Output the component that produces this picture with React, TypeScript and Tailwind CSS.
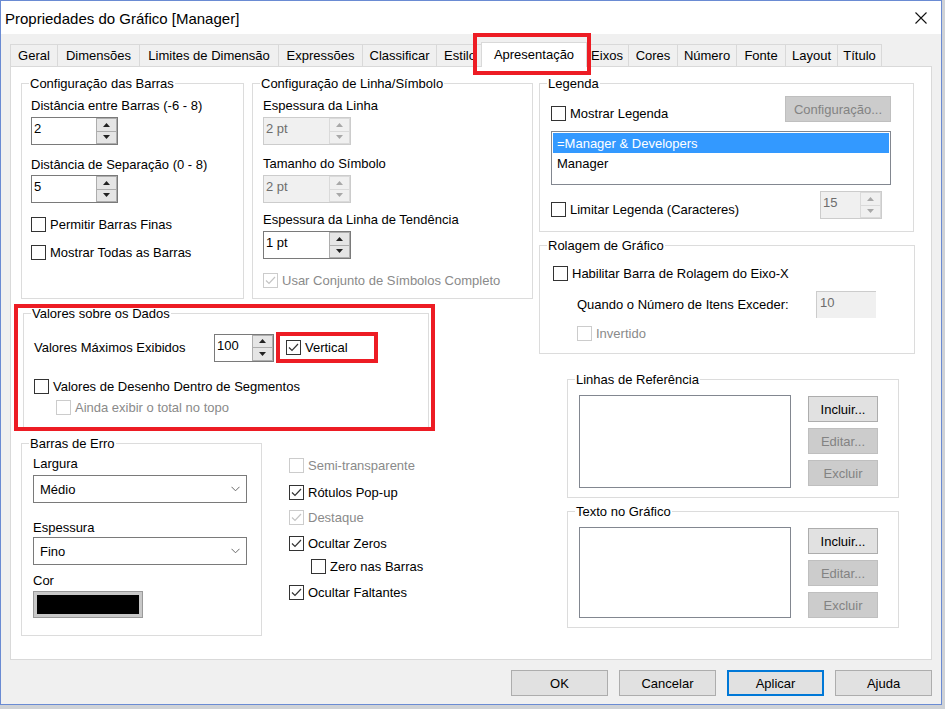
import React from "react";

function Check({ checked = false, disabled = false }: { checked?: boolean; disabled?: boolean }) {
  return (
    <span
      className={`flex h-[15px] w-[15px] shrink-0 items-center justify-center border bg-white ${
        disabled ? "border-[#cccccc]" : "border-[#333333]"
      }`}
    >
      {checked && (
        <svg width="13" height="13" viewBox="0 0 13 13">
          <path d="M2 6.5 L5 9.5 L11 3" fill="none" stroke={disabled ? "#c4c4c4" : "#333333"} strokeWidth="1.2" />
        </svg>
      )}
    </span>
  );
}

function CheckRow({
  label,
  checked,
  disabled,
  className = "",
}: {
  label: string;
  checked?: boolean;
  disabled?: boolean;
  className?: string;
}) {
  return (
    <div className={`flex h-[16px] items-center ${className}`}>
      <Check checked={checked} disabled={disabled} />
      <span className={`ml-[4px] whitespace-nowrap pt-px ${disabled ? "text-[#8a8a8a]" : ""}`}>{label}</span>
    </div>
  );
}

function Arrow({ up, color }: { up?: boolean; color: string }) {
  return (
    <svg width="7" height="4" viewBox="0 0 7 4">
      <path d={up ? "M0 4 L3.5 0 L7 4Z" : "M0 0 L3.5 4 L7 0Z"} fill={color} />
    </svg>
  );
}

function Spin({ value, disabled, className }: { value: string; disabled?: boolean; className: string }) {
  const btn = disabled
    ? "border-[#dadada] bg-[#f0f0f0]"
    : "border-[#adadad] bg-[#e5e5e5]";
  const arrow = disabled ? "#a8a8a8" : "#222222";
  return (
    <div
      className={`flex shrink-0 border ${
        disabled ? "border-[#cccccc] bg-[#f0f0f0] text-[#6d6d6d]" : "border-[#7a7a7a] bg-white"
      } ${className}`}
    >
      <div className="flex-1 pl-[2px] pt-[3px]">{value}</div>
      <div className="flex w-[21px] flex-col">
        <div className={`flex flex-1 items-center justify-center border ${btn}`}>
          <Arrow up color={arrow} />
        </div>
        <div className={`flex flex-1 items-center justify-center border border-t-0 ${btn}`}>
          <Arrow color={arrow} />
        </div>
      </div>
    </div>
  );
}

function Group({ title, className, children }: { title: string; className: string; children?: React.ReactNode }) {
  return (
    <div className={`relative shrink-0 border border-[#dcdcdc] ${className}`}>
      <span className="absolute -top-[8px] left-[7px] whitespace-nowrap bg-white px-[1px] leading-[16px]">{title}</span>
      {children}
    </div>
  );
}

function Select({ value }: { value: string }) {
  return (
    <div className="flex h-[28px] w-[214px] items-center justify-between border border-[#7a7a7a] bg-white pl-[6px] pr-[6px]">
      <span className="pt-px">{value}</span>
      <svg width="9" height="6" viewBox="0 0 9 6">
        <path d="M0.5 0.8 L4.5 4.8 L8.5 0.8" fill="none" stroke="#6a6a6a" strokeWidth="1" />
      </svg>
    </div>
  );
}

function Btn({ label, disabled, className = "" }: { label: string; disabled?: boolean; className?: string }) {
  return (
    <div
      className={`flex items-center justify-center border pt-px ${
        disabled ? "border-[#bfbfbf] bg-[#cccccc] text-[#838383]" : "border-[#adadad] bg-[#e1e1e1]"
      } ${className}`}
    >
      {label}
    </div>
  );
}

const tabs: [string, string][] = [
  ["Geral", "w-[47px]"],
  ["Dimensões", "w-[82px]"],
  ["Limites de Dimensão", "w-[139px]"],
  ["Expressões", "w-[84px]"],
  ["Classificar", "w-[74px]"],
  ["Estilo", "w-[47px]"],
  ["Apresentação", "sel"],
  ["Eixos", "w-[43px]"],
  ["Cores", "w-[49px]"],
  ["Número", "w-[59px]"],
  ["Fonte", "w-[49px]"],
  ["Layout", "w-[52px]"],
  ["Título", "w-[45px] border-r"],
];

function RefBox({ title, className, listH }: { title: string; className: string; listH: string }) {
  return (
    <Group title={title} className={className}>
      <div className="flex pl-[11px] pt-[15px]">
        <div className={`w-[212px] border border-[#828790] bg-white ${listH}`} />
        <div className="ml-[17px] mt-[1px] flex flex-col gap-[6px]">
          <Btn label="Incluir..." className="h-[26px] w-[70px]" />
          <Btn label="Editar..." disabled className="h-[26px] w-[70px]" />
          <Btn label="Excluir" disabled className="h-[26px] w-[70px]" />
        </div>
      </div>
    </Group>
  );
}

export default function App() {
  return (
    <div className="h-[709px] w-[945px] overflow-hidden bg-[#cfd2d6] font-['Liberation_Sans',Arial,sans-serif] text-[13px] leading-[16px] text-black">
      <div className="relative flex h-[705px] w-[942px] flex-col border border-[#6a8bd3] bg-[#f0f0f0]">
        {/* title bar */}
        <div className="flex h-[33px] shrink-0 items-center justify-between bg-white pl-[4px] pr-[14px]">
          <span className="pt-[2px] text-[15px] leading-[18px]">Propriedades do Gráfico [Manager]</span>
          <svg width="12" height="12" viewBox="0 0 12 12">
            <path d="M0.5 0.5 L11.5 11.5 M11.5 0.5 L0.5 11.5" stroke="#111" strokeWidth="1.1" />
          </svg>
        </div>

        {/* tabs */}
        <div className="relative ml-[9px] mt-[10px] flex h-[22px] items-end">
          {tabs.map(([t, w]) =>
            w === "sel" ? (
              <div
                key={t}
                className="relative z-10 -mx-[2px] -mb-px flex h-[25px] w-[106px] items-center justify-center border border-b-0 border-[#d9d9d9] bg-white"
              >
                {t}
              </div>
            ) : (
              <div
                key={t}
                className={`flex h-[22px] items-center justify-center overflow-hidden whitespace-nowrap border-l border-t border-[#d9d9d9] bg-[#f0f0f0] pt-px ${w}`}
              >
                {t}
              </div>
            ),
          )}
          <div className="absolute -top-[11px] left-[463px] z-20 h-[42px] w-[118px] border-4 border-[#ed1c24]" />
        </div>

        {/* panel */}
        <div className="ml-[9px] flex h-[594px] w-[922px] gap-[6px] border border-[#d9d9d9] bg-white pl-[10px] pt-[16px]">
          {/* left area */}
          <div className="flex w-[512px] flex-col">
            <div className="flex gap-[8px]">
              <Group title="Configuração das Barras" className="h-[216px] w-[223px] pl-[9px] pt-[14px]">
                <div>Distância entre Barras (-6 - 8)</div>
                <Spin value="2" className="mt-[3px] h-[28px] w-[87px]" />
                <div className="mt-[12px]">Distância de Separação (0 - 8)</div>
                <Spin value="5" className="mt-[2px] h-[28px] w-[87px]" />
                <CheckRow label="Permitir Barras Finas" className="mt-[13px]" />
                <CheckRow label="Mostrar Todas as Barras" className="mt-[12px]" />
              </Group>
              <Group title="Configuração de Linha/Símbolo" className="h-[216px] w-[281px] pl-[10px] pt-[14px]">
                <div>Espessura da Linha</div>
                <Spin value="2 pt" disabled className="mt-[3px] h-[28px] w-[88px]" />
                <div className="mt-[11px]">Tamanho do Símbolo</div>
                <Spin value="2 pt" disabled className="mt-[3px] h-[28px] w-[88px]" />
                <div className="mt-[9px]">Espessura da Linha de Tendência</div>
                <Spin value="1 pt" className="mt-[3px] h-[28px] w-[88px]" />
                <CheckRow label="Usar Conjunto de Símbolos Completo" checked disabled className="mt-[13px]" />
              </Group>
            </div>

            {/* Valores sobre os Dados (highlighted) */}
            <div className="-ml-[7px] mt-[5px] h-[127px] w-[421px] shrink-0 overflow-hidden border-4 border-[#ed1c24] pl-[5px] pt-[5px]">
              <Group title="Valores sobre os Dados" className="h-[130px] w-[406px] border-b-0 pl-[10px] pt-[18px]">
                <div className="flex h-[31px] items-center">
                  <span className="w-[180px] whitespace-nowrap pt-px">Valores Máximos Exibidos</span>
                  <Spin value="100" className="h-[28px] w-[60px]" />
                  <div className="ml-[2px] flex h-[31px] w-[102px] items-center border-4 border-[#ed1c24] pl-[6px]">
                    <CheckRow label="Vertical" checked />
                  </div>
                </div>
                <CheckRow label="Valores de Desenho Dentro de Segmentos" className="mt-[15px]" />
                <CheckRow label="Ainda exibir o total no topo" disabled className="ml-[22px] mt-[5px]" />
              </Group>
            </div>

            <div className="mt-[12px] flex">
              <Group title="Barras de Erro" className="h-[193px] w-[241px] pl-[11px] pt-[12px]">
                <div>Largura</div>
                <div className="mt-[3px]">
                  <Select value="Médio" />
                </div>
                <div className="mt-[17px]">Espessura</div>
                <div className="mt-[1px]">
                  <Select value="Fino" />
                </div>
                <div className="mt-[8px]">Cor</div>
                <div className="ml-[1px] mt-[3px] h-[25px] w-[108px] border-[3px] border-[#c8c8c8] bg-black outline outline-1 outline-[#9a9a9a]" />
              </Group>
              <div className="ml-[27px] flex flex-col">
                <CheckRow label="Semi-transparente" disabled className="mt-[14px]" />
                <CheckRow label="Rótulos Pop-up" checked className="mt-[11px]" />
                <CheckRow label="Destaque" checked disabled className="mt-[9px]" />
                <CheckRow label="Ocultar Zeros" checked className="mt-[10px]" />
                <CheckRow label="Zero nas Barras" className="ml-[22px] mt-[7px]" />
                <CheckRow label="Ocultar Faltantes" checked className="mt-[10px]" />
              </div>
            </div>
          </div>

          {/* right area */}
          <div className="flex w-[376px] flex-col">
            <Group title="Legenda" className="h-[149px] w-[375px] pl-[11px] pr-[22px] pt-[12px]">
              <div className="flex items-start justify-between">
                <CheckRow label="Mostrar Legenda" className="mt-[9px]" />
                <Btn label="Configuração..." disabled className="h-[26px] w-[106px]" />
              </div>
              <div className="mt-[9px] h-[54px] w-[340px] border border-[#828790] bg-white p-px">
                <div className="flex h-[20px] items-center bg-[#3399ff] pl-[4px] pt-px text-white">=Manager &amp; Developers</div>
                <div className="flex h-[20px] items-center pl-[4px] pt-px">Manager</div>
              </div>
              <div className="mt-[6px] flex items-start justify-between pr-[9px]">
                <CheckRow label="Limitar Legenda (Caracteres)" className="mt-[10px]" />
                <Spin value="15" disabled className="h-[28px] w-[62px]" />
              </div>
            </Group>

            <Group title="Rolagem de Gráfico" className="mt-[13px] h-[109px] w-[376px] pt-[19px]">
              <CheckRow label="Habilitar Barra de Rolagem do Eixo-X" className="ml-[13px]" />
              <div className="ml-[37px] mt-[10px] flex items-center">
                <span className="w-[239px] whitespace-nowrap pt-px">Quando o Número de Itens Exceder:</span>
                <div className="h-[27px] w-[60px] border-l border-t border-[#cccccc] bg-[#f0f0f0] pl-[3px] pt-[3px] text-[#6d6d6d]">10</div>
              </div>
              <CheckRow label="Invertido" disabled className="ml-[37px] mt-[7px]" />
            </Group>

            <RefBox title="Linhas de Referência" className="ml-[28px] mt-[25px] h-[119px] w-[332px]" listH="h-[93px]" />
            <RefBox title="Texto no Gráfico" className="ml-[28px] mt-[13px] h-[117px] w-[332px]" listH="h-[91px]" />
          </div>
        </div>

        {/* dialog buttons */}
        <div className="mt-[10px] flex justify-end gap-[11px] pr-[9px]">
          <Btn label="OK" className="h-[26px] w-[97px]" />
          <Btn label="Cancelar" className="h-[26px] w-[97px]" />
          <div className="flex h-[26px] w-[97px] items-center justify-center border-2 border-[#0078d7] bg-[#e1e1e1] pt-px">Aplicar</div>
          <Btn label="Ajuda" className="h-[26px] w-[97px]" />
        </div>
      </div>
    </div>
  );
}
